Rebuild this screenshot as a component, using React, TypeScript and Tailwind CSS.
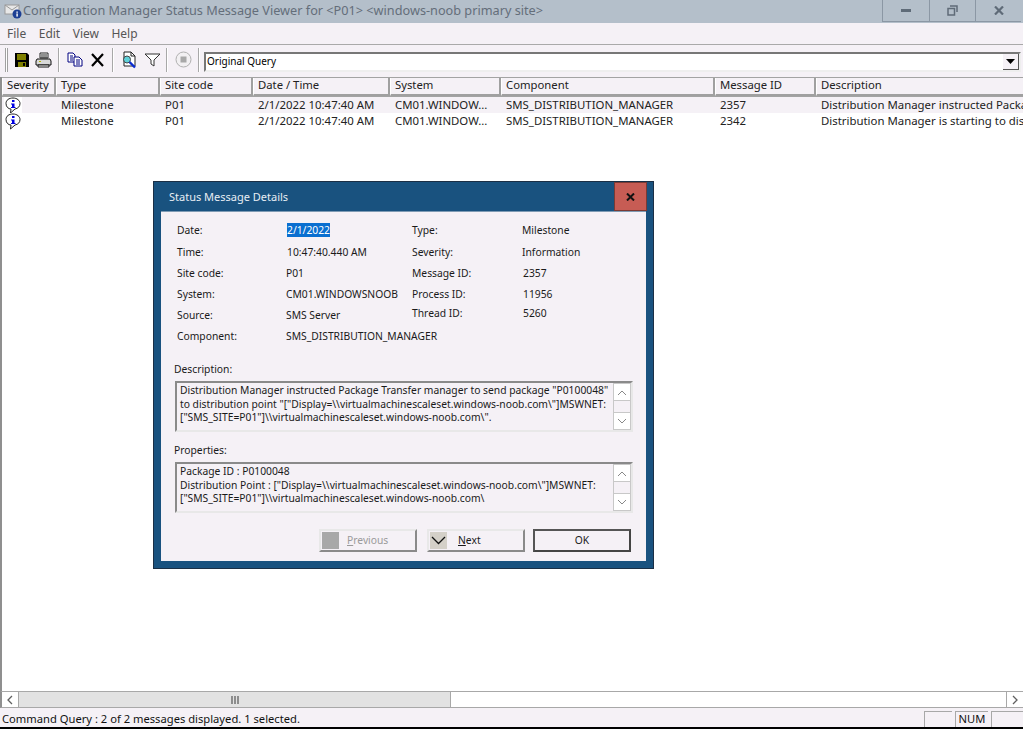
const FONT = "font-['Noto_Sans','Open_Sans',sans-serif]";

const COLS = [
  { label: 'Severity', w: 'w-[54px]' },
  { label: 'Type', w: 'w-[104px]' },
  { label: 'Site code', w: 'w-[93px]' },
  { label: 'Date / Time', w: 'w-[137px]' },
  { label: 'System', w: 'w-[111px]' },
  { label: 'Component', w: 'w-[214px]' },
  { label: 'Message ID', w: 'w-[101px]' },
  { label: 'Description', w: 'w-[209px]' },
];

const ROWS = [
  { id: '2357', desc: 'Distribution Manager instructed Package', bg: 'bg-[#f5f1f6]' },
  { id: '2342', desc: 'Distribution Manager is starting to dist', bg: 'bg-white' },
];

function InfoIcon() {
  return (
    <svg width="18" height="17" viewBox="0 0 18 17">
      <path d="M9 1C5 1 2 3 2 6.500S4.500 12 7 12L6.500 16 11 12C14 11.500 16 9.500 16 6.500S13 1 9 1Z" fill="#fff" stroke="#222" />
      <rect x="8" y="3" width="2.500" height="2" fill="#0000e0" />
      <path d="M7 6.500H10.500V10H11.500V11H7V10H8V7.500H7Z" fill="#0000e0" />
    </svg>
  );
}

function TitleIcon() {
  return (
    <svg width="18" height="17" viewBox="0 0 18 17">
      <rect x="1" y="3" width="14" height="9" fill="#e8e8e8" stroke="#9a9a9a" />
      <path d="M1 3L8 8 15 3" fill="none" stroke="#9a9a9a" />
      <circle cx="13" cy="12" r="4.500" fill="#1c3f94" />
      <rect x="12.400" y="9.500" width="1.400" height="1.300" fill="#fff" />
      <rect x="12.400" y="11.400" width="1.400" height="3.200" fill="#fff" />
    </svg>
  );
}

function ToolSep() {
  return <div className="mx-[4px] h-[24px] w-[2px] border-l border-[#a8a8a8] bg-white" />;
}

function Toolbar() {
  return (
    <div className="flex h-[30px] items-center border-t border-[#a9a9a9] bg-[#f5f1f6] pl-[5px]">
      <div className="mr-[4px] h-[24px] w-[3px] border-x border-[#a0a0a0] bg-white" />
      <div className="flex w-[20px] justify-center">
        <svg width="16" height="16" viewBox="0 0 16 16">
          <path d="M1 1H13L15 3V15H1Z" fill="#000" />
          <rect x="3" y="2" width="9" height="6" fill="#808000" />
          <rect x="4" y="10" width="8" height="5" fill="#808000" />
          <rect x="9" y="11" width="2" height="3" fill="#000" />
        </svg>
      </div>
      <div className="flex w-[22px] justify-center">
        <svg width="17" height="16" viewBox="0 0 17 16">
          <path d="M5 1H13V6H5Z" fill="#fff" stroke="#222" />
          <path d="M6 3H12M6 5H12" stroke="#222" />
          <path d="M2 7H15L16 9V13H1V9Z" fill="#d8d8d8" stroke="#111" />
          <rect x="4" y="9" width="2" height="1" fill="#b8b800" />
          <path d="M3 13H14V15H3Z" fill="#fff" stroke="#111" />
        </svg>
      </div>
      <ToolSep />
      <div className="ml-[1px] flex w-[19px] justify-center">
        <svg width="16" height="15" viewBox="0 0 16 15">
          <path d="M1 1H6L8 3V10H1Z" fill="#fff" stroke="#000080" />
          <path d="M3 4H6M3 6H6M3 8H6" stroke="#000080" />
          <path d="M7 5H12L15 8V14H7Z" fill="#fff" stroke="#000080" />
          <path d="M9 8H13M9 10H13M9 12H13" stroke="#000080" />
        </svg>
      </div>
      <div className="ml-[5px] flex w-[17px] justify-center">
        <svg width="15" height="14" viewBox="0 0 15 14">
          <path d="M2 1L13 13M13 1L2 13" stroke="#000" strokeWidth="2.200" />
        </svg>
      </div>
      <div className="ml-[2px]">
        <ToolSep />
      </div>
      <div className="ml-[1px] flex w-[20px] justify-center">
        <svg width="17" height="18" viewBox="0 0 17 18">
          <path d="M3 1H10L14 5V15H3Z" fill="#fff" stroke="#222" />
          <path d="M10 1V5H14" fill="none" stroke="#222" />
          <circle cx="6" cy="8.500" r="3.500" fill="#5fd0d8" stroke="#444" />
          <path d="M8.500 11L14 16.500" stroke="#0a2bd0" strokeWidth="2.400" />
        </svg>
      </div>
      <div className="ml-[4px] flex w-[18px] justify-center">
        <svg width="17" height="14" viewBox="0 0 17 14">
          <path d="M1 1H16L10 7V13L7 11V7Z" fill="#fff" stroke="#333" />
        </svg>
      </div>
      <div className="ml-[1px]">
        <ToolSep />
      </div>
      <div className="ml-[1px] flex w-[20px] justify-center">
        <svg width="17" height="17" viewBox="0 0 17 17">
          <circle cx="8.500" cy="8.500" r="7.500" fill="#f2f0f2" stroke="#b0b0b0" />
          <rect x="5.500" y="5.500" width="6" height="6" fill="#a8a8a8" />
        </svg>
      </div>
      <div className="ml-[1px]">
        <ToolSep />
      </div>
      <div className="mt-[4px] flex h-[20px] flex-1 items-center border-2 border-b-[#eeeeee] border-l-[#777777] border-r-[#eeeeee] border-t-[#777777] bg-white pl-[1px] text-[10px] text-black">
        <span className="flex-1">Original Query</span>
        <span className="flex h-[16px] w-[16px] items-center justify-center border-b border-r border-[#555555] bg-[#f5f1f6]">
          <svg width="9" height="5" viewBox="0 0 9 5">
            <path d="M0 0H9L4.500 5Z" fill="#000" />
          </svg>
        </span>
      </div>
      <div className="w-[2px]" />
    </div>
  );
}

function MessageList() {
  return (
    <div className="flex min-h-0 flex-1 flex-col overflow-hidden border-l-2 border-[#8f8f8f] bg-white">
      <div className="flex h-[20px] shrink-0 border-y border-[#a3a3a3] bg-[#f5f1f6]">
        {COLS.map((c) => (
          <div key={c.label} className={`${c.w} shrink-0 border-b-2 border-l border-r-2 border-b-[#a0a0a0] border-l-white border-r-[#a0a0a0] pl-[4px] text-[11.300px] leading-[14px] text-[#222222]`}>
            {c.label}
          </div>
        ))}
      </div>
      {ROWS.map((r) => (
        <div key={r.id} className={`flex h-[16px] shrink-0 items-center text-[11.400px] text-[#222222] ${r.bg}`}>
          <div className="w-[52px] shrink-0 pl-[2px]">
            <div className="w-[18px] bg-white">
              <InfoIcon />
            </div>
          </div>
          <div className="w-[104px] shrink-0 pl-[7px]">Milestone</div>
          <div className="w-[93px] shrink-0 pl-[7px]">P01</div>
          <div className="w-[137px] shrink-0 pl-[7px]">2/1/2022 10:47:40 AM</div>
          <div className="w-[111px] shrink-0 overflow-hidden whitespace-nowrap pl-[7px]">CM01.WINDOW...</div>
          <div className="w-[214px] shrink-0 pl-[7px]">SMS_DISTRIBUTION_MANAGER</div>
          <div className="w-[101px] shrink-0 pl-[7px]">{r.id}</div>
          <div className="flex-1 whitespace-nowrap pl-[7px]">{r.desc}</div>
        </div>
      ))}
    </div>
  );
}

function HScroll() {
  return (
    <div className="flex h-[17px] shrink-0 border-y border-[#a8a8a8] border-l-2 border-l-[#8f8f8f] bg-white">
      <div className="flex w-[17px] items-center justify-center border-r border-[#a8a8a8] bg-white">
        <svg width="8" height="10" viewBox="0 0 8 10">
          <path d="M6 1L2 5 6 9" fill="none" stroke="#606060" strokeWidth="1.300" />
        </svg>
      </div>
      <div className="flex w-[432px] items-center justify-center border-r border-[#a8a8a8] bg-[#e2e2e2]">
        <svg width="8" height="8" viewBox="0 0 8 8">
          <path d="M1 0V8M4 0V8M7 0V8" stroke="#606060" strokeWidth="1.300" />
        </svg>
      </div>
      <div className="flex-1" />
      <div className="flex w-[17px] items-center justify-center border-l border-[#a8a8a8] bg-white">
        <svg width="8" height="10" viewBox="0 0 8 10">
          <path d="M2 1L6 5 2 9" fill="none" stroke="#606060" strokeWidth="1.300" />
        </svg>
      </div>
    </div>
  );
}

function StatusBar() {
  return (
    <div className="flex h-[21px] shrink-0 items-center justify-between border-b-2 border-black bg-[#f5f1f6] pl-[2px] pt-[3px] text-[11.200px] text-[#111111]">
      <span>Command Query : 2 of 2 messages displayed. 1 selected.</span>
      <div className="flex h-[16px] gap-[3px]">
        <div className="w-[28px] border-l border-t border-[#a8a8a8]" />
        <div className="flex w-[33px] items-center justify-center border-l border-t border-[#a8a8a8]">NUM</div>
        <div className="w-[32px] border-l border-t border-[#a8a8a8]" />
      </div>
    </div>
  );
}

function Field({ label, value, h = 'h-[21px]', valueClass = '' }: { label: string; value: React.ReactNode; h?: string; valueClass?: string }) {
  return (
    <div className={`flex items-center ${h}`}>
      <div className="w-[109px] shrink-0">{label}</div>
      <div className={valueClass}>{value}</div>
    </div>
  );
}

function TextPanel({ lines }: { lines: string[] }) {
  return (
    <div className="flex h-[51px] border-2 border-b-[#e8e8e8] border-l-[#8a8a8a] border-r-[#e8e8e8] border-t-[#8a8a8a]">
      <div className="flex-1 whitespace-nowrap pl-[3px] pt-[1px] text-[10.300px] leading-[13.500px]">
        {lines.map((l) => (
          <div key={l}>{l}</div>
        ))}
      </div>
      <div className="flex w-[18px] flex-col border border-[#c8c8c8] bg-white">
        <div className="flex h-[17px] items-center justify-center border-b border-[#c8c8c8]">
          <svg width="10" height="7" viewBox="0 0 10 7">
            <path d="M1 6L5 2 9 6" fill="none" stroke="#888888" />
          </svg>
        </div>
        <div className="flex-1 bg-[#f5f1f6]" />
        <div className="flex h-[17px] items-center justify-center border-t border-[#c8c8c8]">
          <svg width="10" height="7" viewBox="0 0 10 7">
            <path d="M1 1L5 5 9 1" fill="none" stroke="#888888" />
          </svg>
        </div>
      </div>
    </div>
  );
}

function Dialog() {
  return (
    <div className="absolute left-[153px] top-[181px] flex h-[388px] w-[501px] flex-col border border-[#1b2f45] bg-[#19527f] text-[10.300px] text-[#1a1a1a]">
      <div className="flex h-[29px] shrink-0 items-start justify-between">
        <span className="pl-[15px] pt-[7px] text-[11px] text-[#e8eef4]">Status Message Details</span>
        <div className="mr-[6px] flex h-[29px] w-[33px] items-center justify-center border border-[#7a3a34] bg-[#c75c54]">
          <svg width="9" height="8" viewBox="0 0 9 8">
            <path d="M1 0.500L8 7.500M8 0.500L1 7.500" stroke="#111111" strokeWidth="2" />
          </svg>
        </div>
      </div>
      <div className="mx-[7px] mb-[7px] flex-1 border-t border-[#7f9bb4] bg-[#f5f1f6] pl-[14px] pr-[13px] pt-[7px]">
        <div className="flex pl-[2px]">
          <div className="w-[235px]">
            <Field
              label="Date:"
              h="h-[23px]"
              value={<span className="bg-[#0a6fd0] text-white">2/1/2022</span>}
              valueClass="pl-[1px]"
            />
            <Field label="Time:" value="10:47:40.440 AM" valueClass="pl-[1px]" />
            <Field label="Site code:" value="P01" />
            <Field label="System:" value="CM01.WINDOWSNOOB" />
            <Field label="Source:" value="SMS Server" />
            <Field label="Component:" value="SMS_DISTRIBUTION_MANAGER" />
          </div>
          <div className="flex-1">
            <Field label="Type:" h="h-[23px]" value="Milestone" valueClass="pl-[1px]" />
            <Field label="Severity:" value="Information" valueClass="pl-[1px]" />
            <Field label="Message ID:" value="2357" valueClass="pl-[2px]" />
            <Field label="Process ID:" value="11956" valueClass="pl-[2px]" />
            <Field label="Thread ID:" h="h-[17px]" value="5260" valueClass="pl-[2px]" />
          </div>
        </div>
        <div className="-ml-[1px] pt-[14px] leading-[16px]">Description:</div>
        <div className="pt-[4px]">
          <TextPanel
            lines={[
              'Distribution Manager instructed Package Transfer manager to send package "P0100048"',
              'to distribution point "["Display=\\\\virtualmachinescaleset.windows-noob.com\\"]MSWNET:',
              '["SMS_SITE=P01"]\\\\virtualmachinescaleset.windows-noob.com\\".',
            ]}
          />
        </div>
        <div className="-ml-[1px] pt-[10px] leading-[16px]">Properties:</div>
        <div className="pt-[4px]">
          <TextPanel
            lines={[
              'Package ID : P0100048',
              'Distribution Point : ["Display=\\\\virtualmachinescaleset.windows-noob.com\\"]MSWNET:',
              '["SMS_SITE=P01"]\\\\virtualmachinescaleset.windows-noob.com\\',
            ]}
          />
        </div>
        <div className="flex justify-end pr-[2px] pt-[16px]">
          <div className="flex h-[23px] w-[98px] items-center border-2 border-b-[#8a8a8a] border-l-[#e8e8e8] border-r-[#8a8a8a] border-t-[#e8e8e8]">
            <div className="ml-[1px] h-[17px] w-[17px] bg-[#a8a8a8]" />
            <span className="ml-[8px] text-[#9a9a9a]">
              <u>P</u>revious
            </span>
          </div>
          <div className="ml-[10px] flex h-[23px] w-[98px] items-center border-2 border-b-[#8a8a8a] border-l-[#e8e8e8] border-r-[#8a8a8a] border-t-[#e8e8e8]">
            <div className="ml-[1px] flex h-[17px] w-[17px] items-center justify-center bg-[#d4d0c8]">
              <svg width="15" height="9" viewBox="0 0 15 9">
                <path d="M1 1L7.500 7.500 14 1" fill="none" stroke="#111111" strokeWidth="1.300" />
              </svg>
            </div>
            <span className="ml-[11px]">
              <u>N</u>ext
            </span>
          </div>
          <div className="ml-[8px] flex h-[23px] w-[98px] items-center justify-center border-2 border-b-[#444444] border-l-[#555555] border-r-[#444444] border-t-[#555555]">
            OK
          </div>
        </div>
      </div>
    </div>
  );
}

export default function App() {
  return (
    <div className={`relative flex h-[729px] w-[1023px] flex-col overflow-hidden bg-white ${FONT}`}>
      <div className="flex h-[23px] shrink-0 items-start justify-between bg-[#b4bfca]">
        <div className="flex items-center pl-[4px] pt-[1px] text-[12.700px] text-[#646e7a]">
          <TitleIcon />
          <span className="pl-[1px]">Configuration Manager Status Message Viewer for &lt;P01&gt; &lt;windows-noob primary site&gt;</span>
        </div>
        <div className="mr-[2px] flex h-[22px] border-b border-l border-[#8b97a4]">
          <div className="flex w-[47px] items-center justify-center border-r border-[#8b97a4]">
            <div className="h-[3px] w-[10px] bg-[#5f6b78]" />
          </div>
          <div className="flex w-[46px] items-center justify-center border-r border-[#8b97a4]">
            <svg width="11" height="11" viewBox="0 0 11 11">
              <path d="M3 1H10V7M1 3.500H7.500V10H1Z" fill="none" stroke="#5f6b78" strokeWidth="1.500" />
            </svg>
          </div>
          <div className="flex w-[45px] items-center justify-center">
            <svg width="10" height="9" viewBox="0 0 10 9">
              <path d="M1 0.500L9 8.500M9 0.500L1 8.500" stroke="#5f6b78" strokeWidth="2.200" />
            </svg>
          </div>
        </div>
      </div>
      <div className="flex h-[21px] shrink-0 items-center gap-[12.500px] bg-[#f5f1f6] pl-[7px] text-[12px] text-[#555555]">
        <span>File</span>
        <span>Edit</span>
        <span>View</span>
        <span>Help</span>
      </div>
      <Toolbar />
      <div className="h-[3px] shrink-0 bg-[#f5f1f6]" />
      <MessageList />
      <HScroll />
      <StatusBar />
      <Dialog />
    </div>
  );
}
